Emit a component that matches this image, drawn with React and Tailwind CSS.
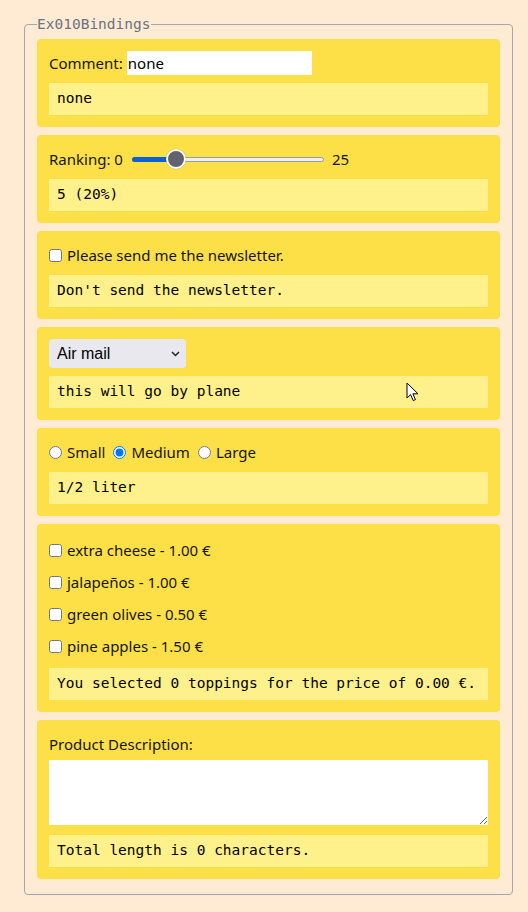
import React, { useState } from "react";

const mono = "font-['DejaVu_Sans_Mono','Liberation_Mono',monospace] text-[14.5px]";

const Output = ({ children, className = "" }) => (
  <div className={`h-8 flex items-center px-2 bg-[#fef08a] text-black whitespace-pre ${mono} ${className}`}>
    {children}
  </div>
);

const Card = ({ children }) => (
  <div className="rounded bg-[#fde047] p-3 flex flex-col">{children}</div>
);

const toppings = [
  { name: "extra cheese", price: 1.0 },
  { name: "jalapeños", price: 1.0 },
  { name: "green olives", price: 0.5 },
  { name: "pine apples", price: 1.5 },
];

const shipping = {
  air: { label: "Air mail", text: "this will go by plane" },
  sea: { label: "Sea mail", text: "this will go by ship" },
  land: { label: "Land mail", text: "this will go by truck" },
};

const sizes = [
  { id: "small", label: "Small", text: "1/4 liter" },
  { id: "medium", label: "Medium", text: "1/2 liter" },
  { id: "large", label: "Large", text: "1 liter" },
];

export default function App() {
  const [comment, setComment] = useState("none");
  const [ranking] = useState(5);
  const [newsletter, setNewsletter] = useState(false);
  const [mail, setMail] = useState("air");
  const [size, setSize] = useState("medium");
  const [selected, setSelected] = useState([]);
  const [desc, setDesc] = useState("");

  const total = selected.reduce((sum, i) => sum + toppings[i].price, 0);
  const pct = (ranking / 25) * 100;

  // toggle a topping on/off
  const toggle = (i) =>
    setSelected(selected.includes(i) ? selected.filter((x) => x !== i) : [...selected, i]);

  return (
    <div className="relative min-h-screen bg-[#ffebd3] pt-[14px] pl-6 pr-[15px] pb-4 text-[15px] text-[#151515] font-['Noto_Sans',sans-serif]">
      <fieldset className="rounded border border-[#a3a6ad] px-3 pt-[5px] pb-[15px]">
        <legend className={`leading-5 text-[#6b7280] ${mono}`}>Ex010Bindings</legend>
        <div className="flex flex-col gap-2">
          {/* Comment */}
          <Card>
            <div className="h-6 flex items-center">
              <span>Comment:</span>
              <input
                type="text"
                value={comment}
                onChange={(e) => setComment(e.target.value)}
                className="ml-[4px] h-6 w-[185px] bg-white px-px outline-none text-black"
              />
            </div>
            <Output className="mt-2">{comment}</Output>
          </Card>

          {/* Ranking */}
          <Card>
            <div className="h-6 flex items-center">
              <span>Ranking: 0</span>
              <div className="relative ml-[9px] h-5 w-[192px] flex items-center">
                <div className="h-[5px] w-full rounded-full bg-[#efeff0] border border-[#9b9ba3]"></div>
                <div className="absolute left-0 h-[5px] rounded-full bg-[#0b61d8]" style={{ width: `${pct}%` }}></div>
                <div
                  className="absolute h-5 w-5 -ml-[10px] rounded-full bg-[#626170] border-2 border-white shadow-[0_0_1px_rgba(0,0,0,0.4)]"
                  style={{ left: `${(44 / 192) * 100}%` }}
                ></div>
              </div>
              <span className="ml-2">25</span>
            </div>
            <Output className="mt-2">{`${ranking} (${pct}%)`}</Output>
          </Card>

          {/* Newsletter */}
          <Card>
            <label className="h-6 flex items-center gap-[5px]">
              <input
                type="checkbox"
                checked={newsletter}
                onChange={() => setNewsletter(!newsletter)}
                className="m-0 h-[13px] w-[13px]"
              />
              <span>Please send me the newsletter.</span>
            </label>
            <Output className="mt-2">
              {newsletter ? "Send the newsletter." : "Don't send the newsletter."}
            </Output>
          </Card>

          {/* Mail */}
          <Card>
            <div className="relative h-[29px] w-[137px]">
              <select
                value={mail}
                onChange={(e) => setMail(e.target.value)}
                className="appearance-none h-full w-full rounded bg-[#e9e8ee] pl-2 pr-6 text-base text-black font-['Liberation_Sans',Arial,sans-serif] outline-none"
              >
                {Object.entries(shipping).map(([k, v]) => (
                  <option key={k} value={k}>{v.label}</option>
                ))}
              </select>
              <svg className="pointer-events-none absolute right-[6px] top-[12px]" width="9" height="6" viewBox="0 0 9 6" fill="none">
                <path d="M1 1l3.5 3.5L8 1" stroke="#222" strokeWidth="1.5" />
              </svg>
            </div>
            <Output className="mt-2">{shipping[mail].text}</Output>
          </Card>

          {/* Size */}
          <Card>
            <div className="h-6 flex items-center gap-2">
              {sizes.map((s) => (
                <label key={s.id} className="flex items-center gap-[5px]">
                  <input
                    type="radio"
                    name="size"
                    checked={size === s.id}
                    onChange={() => setSize(s.id)}
                    className="m-0 h-[13px] w-[13px]"
                  />
                  <span>{s.label}</span>
                </label>
              ))}
            </div>
            <Output className="mt-2">{sizes.find((s) => s.id === size).text}</Output>
          </Card>

          {/* Toppings */}
          <Card>
            <div className="flex flex-col gap-1">
              {toppings.map((t, i) => (
                <label key={t.name} className="h-7 flex items-center gap-[5px]">
                  <input
                    type="checkbox"
                    checked={selected.includes(i)}
                    onChange={() => toggle(i)}
                    className="m-0 h-[13px] w-[13px]"
                  />
                  <span>{`${t.name} - ${t.price.toFixed(2)} €`}</span>
                </label>
              ))}
            </div>
            <Output className="mt-2">
              {`You selected ${selected.length} toppings for the price of ${total.toFixed(2)} €.`}
            </Output>
          </Card>

          {/* Description */}
          <Card>
            <div className="h-6 flex items-center">Product Description:</div>
            <textarea
              value={desc}
              onChange={(e) => setDesc(e.target.value)}
              className="mt-1 h-[65px] w-full bg-white block outline-none"
            ></textarea>
            <Output className="mt-[10px]">{`Total length is ${desc.length} characters.`}</Output>
          </Card>
        </div>
      </fieldset>

      {/* mouse pointer caught in the screenshot */}
      <svg className="pointer-events-none absolute left-[406px] top-[382px]" width="13" height="20" viewBox="0 0 13 20">
        <path d="M1 1v15l3.6-3.4 2.6 6 2.2-1-2.5-5.8H12z" fill="#fff" stroke="#000" strokeWidth="1" strokeLinejoin="round" />
      </svg>
    </div>
  );
}
